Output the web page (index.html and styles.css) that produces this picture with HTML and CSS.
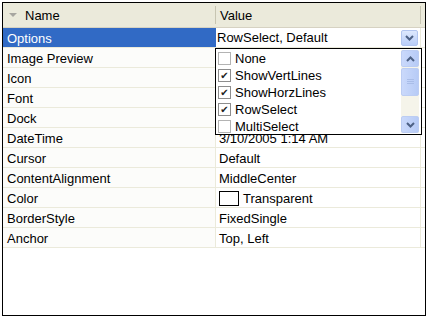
FILE: index.html
```html
<!DOCTYPE html>
<html lang="en">
<head>
  <meta charset="UTF-8">
  <title>Property Grid</title>
  <link rel="stylesheet" href="styles.css">
</head>
<body>
  <div class="grid">
    <div class="header">
      <div class="hcell name"><span class="sort"></span>Name</div>
      <div class="hcell value">Value</div>
    </div>

    <div class="rows">
      <div class="row selected">
        <div class="cell name">Options</div>
        <div class="cell value">RowSelect, Default
          <span class="dropbtn">
            <svg width="9" height="6" viewBox="0 0 9 6"><path d="M1 1 L4.5 4.5 L8 1" fill="none" stroke="#4d6185" stroke-width="2"/></svg>
          </span>
        </div>
      </div>
      <div class="row"><div class="cell name">Image Preview</div><div class="cell value"></div></div>
      <div class="row"><div class="cell name">Icon</div><div class="cell value"></div></div>
      <div class="row"><div class="cell name">Font</div><div class="cell value"></div></div>
      <div class="row"><div class="cell name">Dock</div><div class="cell value"></div></div>
      <div class="row"><div class="cell name">DateTime</div><div class="cell value">3/10/2005 1:14 AM</div></div>
      <div class="row"><div class="cell name">Cursor</div><div class="cell value">Default</div></div>
      <div class="row"><div class="cell name">ContentAlignment</div><div class="cell value">MiddleCenter</div></div>
      <div class="row"><div class="cell name">Color</div><div class="cell value"><span class="swatch"></span>Transparent</div></div>
      <div class="row"><div class="cell name">BorderStyle</div><div class="cell value">FixedSingle</div></div>
      <div class="row"><div class="cell name">Anchor</div><div class="cell value">Top, Left</div></div>
    </div>

    <!-- 開いているドロップダウン -->
    <div class="dropdown">
      <div class="items">
        <div class="item"><span class="check"></span>None</div>
        <div class="item"><span class="check on"></span>ShowVertLines</div>
        <div class="item"><span class="check on"></span>ShowHorzLines</div>
        <div class="item"><span class="check on"></span>RowSelect</div>
        <div class="item"><span class="check"></span>MultiSelect</div>
      </div>
      <div class="scrollbar">
        <div class="sbtn">
          <svg width="9" height="6" viewBox="0 0 9 6"><path d="M1 5 L4.5 1.5 L8 5" fill="none" stroke="#4d6185" stroke-width="2"/></svg>
        </div>
        <div class="thumb">
          <svg width="7" height="6" viewBox="0 0 7 6"><path d="M0 0.5 H7 M0 2.5 H7 M0 4.5 H7" stroke="#a9bde8" stroke-width="1"/></svg>
        </div>
        <div class="track"></div>
        <div class="sbtn">
          <svg width="9" height="6" viewBox="0 0 9 6"><path d="M1 1 L4.5 4.5 L8 1" fill="none" stroke="#4d6185" stroke-width="2"/></svg>
        </div>
      </div>
    </div>
  </div>
</body>
</html>
```

FILE: styles.css
```css
body {
  margin: 0;
  background-color: #fff;
  font-family: "Liberation Sans", Arial, sans-serif;
  font-size: 13px;
  color: #000;
}

.grid {
  position: relative;
  margin: 2px;
  width: 422px;
  height: 312px;
  border: 1px solid #000;
  background-color: #fff;
}

.header {
  display: flex;
  height: 24px;
  background-color: #ebeadb;
  border-bottom: 1px solid #d6d2c2;
}

.hcell {
  display: flex;
  align-items: center;
  box-sizing: border-box;
}

.hcell.name {
  width: 212px;
  padding-left: 6px;
}

.hcell.value {
  flex: 1;
  padding-left: 4px;
  border-left: 1px solid #c7c5b2;
  margin: 3px 0;
  margin-right: 4px;
  border-right: 1px solid #c7c5b2;
}

.sort {
  width: 0;
  height: 0;
  border-left: 4px solid transparent;
  border-right: 4px solid transparent;
  border-top: 4px solid #a7a6a0;
  margin-right: 8px;
}

.row {
  display: flex;
  height: 20px;
  border-bottom: 1px solid #ebeadb;
  box-sizing: border-box;
}

.cell {
  display: flex;
  align-items: center;
  box-sizing: border-box;
  padding-top: 1px;
}

.cell.name {
  width: 212px;
  padding-left: 4px;
  background-color: #fcfcfa;
}

.cell.value {
  flex: 1;
  padding-left: 3px;
  border-left: 1px solid #ebeadb;
  margin-right: 4px;
  border-right: 1px solid #ebeadb;
}

.row.selected .cell.name {
  background-color: #316ac5;
  color: #fff;
}

.row.selected .cell.value {
  border-left: 1px solid #316ac5;
  padding-left: 1px;
  padding-top: 0;
}

.dropbtn {
  margin-left: auto;
  margin-right: 2px;
  width: 17px;
  height: 16px;
  box-sizing: border-box;
  display: flex;
  align-items: center;
  justify-content: center;
  background: linear-gradient(#dde8fd, #b9cdf8);
  border: 1px solid #b2c5ef;
  border-radius: 2px;
}

.swatch {
  width: 20px;
  height: 15px;
  box-sizing: border-box;
  border: 1px solid #000;
  margin-right: 4px;
}

.dropdown {
  position: absolute;
  left: 212px;
  top: 45px;
  width: 207px;
  height: 87px;
  box-sizing: border-box;
  border: 1px solid #000;
  background-color: #fff;
  display: flex;
}

.items {
  flex: 1;
  padding-top: 1px;
}

.item {
  display: flex;
  align-items: center;
  height: 17px;
  padding-left: 2px;
}

.check {
  width: 13px;
  height: 13px;
  box-sizing: border-box;
  border: 1px solid #b3b3b3;
  margin-right: 4px;
  display: flex;
  align-items: center;
  justify-content: center;
  font-size: 11px;
  line-height: 1;
}

.check.on {
  border-color: #8d8d8d;
}

.check.on::after {
  content: "✔";
  color: #222;
  font-family: "DejaVu Sans", sans-serif;
  font-size: 10px;
}

.scrollbar {
  width: 18px;
  margin: 1px 2px 1px 0;
  display: flex;
  flex-direction: column;
  background-color: #f5f4ea;
}

.sbtn, .thumb {
  height: 17px;
  box-sizing: border-box;
  display: flex;
  align-items: center;
  justify-content: center;
  background: linear-gradient(90deg, #cad9fb, #b7cbf6);
  border: 1px solid #bccdf3;
  border-radius: 2px;
}

.thumb {
  height: 28px;
  margin-top: 1px;
}

.track {
  flex: 1;
}
```
